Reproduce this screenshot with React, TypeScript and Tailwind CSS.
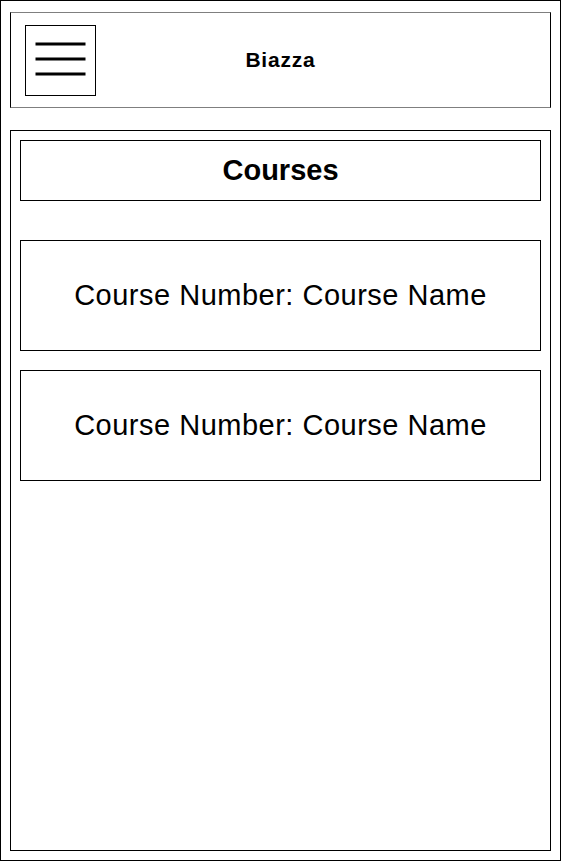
export default function App() {
  return (
    <div className="w-[561px] h-[861px] border border-black bg-white font-['Liberation_Sans',Arial,sans-serif] text-black">
      {/* Top bar */}
      <header className="ml-[9px] mt-[11px] w-[541px] h-[96px] border border-black border-y-[#7f7f7f] flex items-center">
        <button
          type="button"
          className="ml-[14px] w-[71px] h-[71px] border border-black shrink-0"
        >
          <svg width="69" height="69" viewBox="0 0 69 69">
            <line x1="9.5" y1="18" x2="59.5" y2="18" stroke="black" strokeWidth={3} />
            <line x1="9.5" y1="33" x2="59.5" y2="33" stroke="black" strokeWidth={3} />
            <line x1="9.5" y1="48" x2="59.5" y2="48" stroke="black" strokeWidth={3} />
          </svg>
        </button>
        <h1 className="flex-1 text-center text-[21px] font-bold tracking-[0.8px] pr-[85px]">
          Biazza
        </h1>
      </header>

      {/* Course list */}
      <main className="ml-[9px] mt-[22px] w-[541px] h-[721px] border border-black pt-[9px] px-[9px] flex flex-col">
        <div className="h-[61px] border border-black flex items-center justify-center">
          <h2 className="text-[29px] font-bold">Courses</h2>
        </div>

        <div className="mt-[39px] flex flex-col gap-[19px]">
          {[1, 2].map((i) => (
            <div
              key={i}
              className="h-[111px] border border-black flex items-center justify-center text-[29px] tracking-[0.5px]"
            >
              Course Number: Course Name
            </div>
          ))}
        </div>
      </main>
    </div>
  );
}
